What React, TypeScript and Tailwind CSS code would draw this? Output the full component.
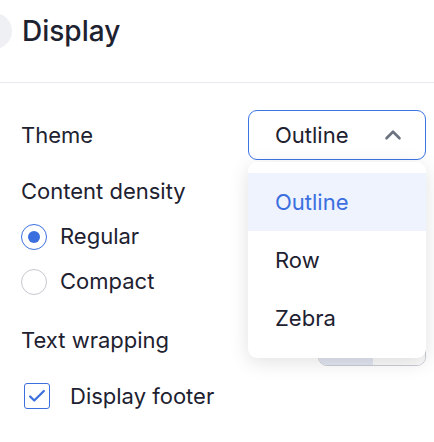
import { ChevronUp } from "lucide-react";

const options = ["Outline", "Row", "Zebra"];

function Radio({ checked, label }: { checked?: boolean; label: string }) {
  return (
    <div className="flex h-[45px] items-center">
      <span
        className={
          "flex h-[26px] w-[26px] items-center justify-center rounded-full border-[1.5px] bg-white " +
          (checked ? "border-[#3b6fe0]" : "border-[#c5c8d1]")
        }
      >
        {checked && <span className="h-[12px] w-[12px] rounded-full bg-[#3b6fe0]" />}
      </span>
      <span className="ml-[13px] text-[22px] text-[#1d2130]">{label}</span>
    </div>
  );
}

export default function App() {
  return (
    <div className="h-[442px] w-[434px] overflow-hidden bg-white font-['Inter','Liberation_Sans',sans-serif] text-[#1d2130]">
      <header className="flex h-[83px] items-start border-b border-[#e8e9ec] pt-[13px]">
        <span className="ml-[-24px] h-[36px] w-[36px] rounded-full bg-[#eef0f4]" />
        <h1 className="ml-[10px] text-[28px] font-medium leading-[36px]">Display</h1>
      </header>

      <div className="relative pl-[21px] pr-[8px] pt-[27px]">
        <div className="flex h-[50px] items-center justify-between">
          <span className="text-[22px]">Theme</span>
          <button
            type="button"
            className="flex h-[50px] w-[178px] items-center justify-between rounded-[9px] border border-[#3b75e4] bg-white pl-[26px] pr-[19px]"
          >
            <span className="text-[22px]">Outline</span>
            <ChevronUp className="h-[26px] w-[26px] text-[#6b7280]" strokeWidth={2.4} />
          </button>
        </div>

        <div className="mt-[17px] flex h-[28px] items-center">
          <span className="text-[22px]">Content density</span>
        </div>
        <div className="mt-[9px]">
          <Radio checked label="Regular" />
          <Radio label="Compact" />
        </div>

        <div className="mt-[13px] flex h-[49px] items-start justify-between">
          <span className="mt-[7px] text-[22px]">Text wrapping</span>
          <div className="flex h-[49px] w-[108px] overflow-hidden rounded-[9px] border border-[#c8ccd4]">
            <span className="w-[54px] bg-[#e1e5f1]" />
            <span className="flex-1 bg-[#fafafb]" />
          </div>
        </div>

        <div className="mt-[8px] flex h-[44px] items-center pl-[3px]">
          <span className="flex h-[26px] w-[26px] items-center justify-center rounded-[3px] border-[1.5px] border-[#3b6fe0] bg-white">
            <svg viewBox="0 0 24 24" className="h-[22px] w-[22px]" fill="none" stroke="#3b6fe0" strokeWidth="2.4" strokeLinecap="round" strokeLinejoin="round">
              <path d="M4.5 12.5l4.5 4.5L19.5 6.5" />
            </svg>
          </span>
          <span className="ml-[20px] text-[22px]">Display footer</span>
        </div>

        <ul className="absolute left-[248px] top-[79px] w-[178px] rounded-[9px] bg-white py-[11px] shadow-[0_4px_20px_rgba(0,0,0,0.12)]">
          {options.map((o, i) => (
            <li
              key={o}
              className={
                "flex h-[58px] items-center pl-[27px] text-[22px] " +
                (i === 0 ? "bg-[#eef3fd] text-[#3b6fe0]" : "text-[#1d2130]")
              }
            >
              {o}
            </li>
          ))}
        </ul>
      </div>
    </div>
  );
}
